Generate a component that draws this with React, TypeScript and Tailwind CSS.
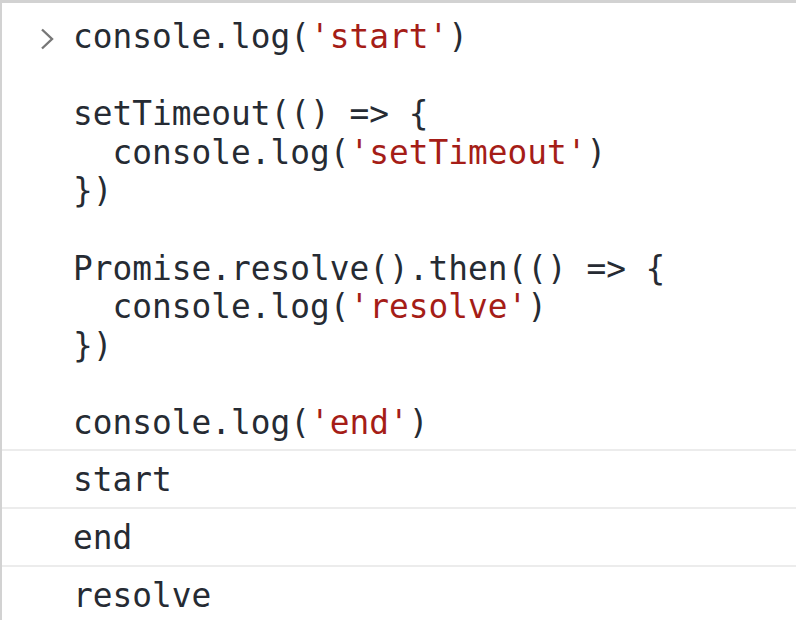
const code: { text: string; str?: string; tail?: string }[] = [
  { text: "console.log(", str: "'start'", tail: ")" },
  { text: "" },
  { text: "setTimeout(() => {" },
  { text: "  console.log(", str: "'setTimeout'", tail: ")" },
  { text: "})" },
  { text: "" },
  { text: "Promise.resolve().then(() => {" },
  { text: "  console.log(", str: "'resolve'", tail: ")" },
  { text: "})" },
  { text: "" },
  { text: "console.log(", str: "'end'", tail: ")" },
];

const output = ["start", "end", "resolve"];

export default function App() {
  return (
    <div
      className="w-[796px] h-[620px] overflow-hidden bg-white border-t-[3px] border-l-2 border-[#d2d2d2] text-[#262b33] text-[32.8px] leading-[38.6px]"
      style={{ fontFamily: '"DejaVu Sans Mono", "Liberation Mono", monospace' }}
    >
      <div className="flex pt-[15px] pb-[6px]">
        <div className="w-[71px] shrink-0 flex justify-end pr-[18px] pt-[9px]">
          <svg width="16" height="24" viewBox="0 0 16 24" fill="none">
            <path d="M3 2.5 L13 12 L3 21.5" stroke="#777777" strokeWidth="2.4" />
          </svg>
        </div>
        <div className="whitespace-pre">
          {code.map((l, i) => (
            <div key={i} className="h-[38.6px]">
              {l.text}
              {l.str && <span className="text-[#a51d17]">{l.str}</span>}
              {l.tail}
            </div>
          ))}
        </div>
      </div>
      {output.map((o) => (
        <div
          key={o}
          className="h-[58px] border-t-2 border-[#ececec] flex items-center pl-[71px] pt-[3px]"
        >
          {o}
        </div>
      ))}
    </div>
  );
}
